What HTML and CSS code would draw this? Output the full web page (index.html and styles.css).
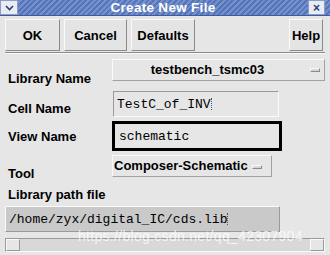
FILE: index.html
```html
<!DOCTYPE html>
<html lang="en">
<head>
  <meta charset="UTF-8" />
  <title>Create New File</title>
  <link rel="stylesheet" href="styles.css">
</head>
<body>
  <div class="dialog">
    <div class="titlebar">
      <span class="tb-btn menu-btn">
        <svg width="9" height="6" viewBox="0 0 9 6"><path d="M1 1 L4.5 4.5 L8 1" fill="none" stroke="#2c3e6b" stroke-width="1.6"/></svg>
      </span>
      <span class="title">Create New File</span>
      <span class="tb-btn close-btn">&#215;</span>
    </div>

    <div class="buttons">
      <button class="btn ok">OK</button>
      <button class="btn cancel">Cancel</button>
      <button class="btn defaults">Defaults</button>
      <span class="spacer"></span>
      <button class="btn help">Help</button>
    </div>
    <div class="sep"></div>

    <div class="form">
      <div class="row r-lib">
        <span class="label">Library Name</span>
        <div class="option wide">testbench_tsmc03<span class="ind"></span></div>
      </div>
      <div class="row r-cell">
        <span class="label">Cell Name</span>
        <div class="field cell">TestC_of_INV<span class="caret"></span></div>
      </div>
      <div class="row r-view">
        <span class="label">View Name</span>
        <div class="field view">schematic</div>
      </div>
      <div class="row r-tool">
        <span class="label">Tool</span>
        <div class="option tool">Composer-Schematic<span class="ind"></span></div>
      </div>
      <div class="path-label">Library path file</div>
      <div class="field path">/home/zyx/digital_IC/cds.lib<span class="caret"></span></div>
      <div class="scrollbar">
        <span class="arrow left"></span>
        <span class="trough"></span>
        <span class="arrow right"></span>
      </div>
    </div>
    <div class="watermark">https://blog.csdn.net/qq_42307904</div>
  </div>
</body>
</html>
```

FILE: styles.css
```css
* {
  box-sizing: border-box;
  margin: 0;
  padding: 0;
}

body {
  width: 330px;
  height: 255px;
  overflow: hidden;
  background: #e6e6e6;
  font-family: "Liberation Sans", Arial, sans-serif;
  color: #000;
}

.dialog {
  position: relative;
  width: 330px;
  height: 255px;
}

.titlebar {
  height: 16px;
  display: flex;
  align-items: center;
  justify-content: space-between;
  background: repeating-linear-gradient(135deg, #5574b9 0 2px, #7490cd 2px 4px);
  border-bottom: 1px solid #3e5a9a;
}

.title {
  color: #fff;
  font-weight: bold;
  font-size: 13.5px;
  letter-spacing: 0.3px;
}

.tb-btn {
  width: 18px;
  height: 15px;
  display: flex;
  align-items: center;
  justify-content: center;
  background: #e8ecf4;
  border: 1px solid #8c9cc4;
  font-size: 12px;
  font-weight: bold;
  color: #2c3e6b;
}

.close-btn {
  margin-right: 5px;
  width: 17px;
}

.buttons {
  display: flex;
  gap: 4px;
  padding: 3px 7px 0 5px;
  height: 36px;
}

.btn {
  height: 32px;
  background: #e4e4e4;
  border: 1px solid;
  border-color: #fafafa #8a8a8a #8a8a8a #fafafa;
  font-family: "Liberation Sans", Arial, sans-serif;
  font-weight: bold;
  font-size: 13px;
  color: #000;
}

.ok { width: 55px; }
.cancel { width: 63px; }
.defaults { width: 64px; }
.help { width: 34px; }
.spacer { flex: 1; }

.sep {
  margin: 0 5px 0 5px;
  height: 2px;
  border-top: 1px solid #8a8a8a;
  border-bottom: 1px solid #fafafa;
}

.form {
  padding: 4px 5px 0 5px;
}

.row {
  display: grid;
  grid-template-columns: 107px auto;
  align-items: center;
}

.label {
  font-weight: bold;
  font-size: 13px;
  padding-left: 3px;
}

.r-lib { height: 23px; margin-bottom: 10px; }
.r-lib .label { align-self: end; margin-bottom: -5px; }
.r-cell { height: 26px; margin-bottom: 4px; }
.r-cell .label { align-self: end; margin-bottom: 1px; }
.r-view { height: 30px; margin-bottom: 3px; }
.r-tool { height: 23px; }
.r-tool .label { align-self: end; margin-bottom: -4px; }

.option {
  position: relative;
  height: 22px;
  display: flex;
  align-items: center;
  justify-content: center;
  background: #e6e6e6;
  border: 1px solid;
  border-color: #fafafa #a0a0a0 #a0a0a0 #fafafa;
  font-weight: bold;
  font-size: 13px;
}

.wide {
  width: 213px;
  padding-right: 22px;
}

.tool {
  width: 160px;
  justify-content: flex-start;
  padding-left: 1px;
}

.ind {
  width: 10px;
  height: 4px;
  background: #d6d6d6;
  border: 1px solid;
  border-color: #fafafa #8a8a8a #8a8a8a #fafafa;
}

.wide .ind {
  position: absolute;
  right: 4px;
  top: 8px;
}

.tool .ind {
  margin-left: 4px;
  margin-top: 2px;
}

.field {
  display: flex;
  align-items: center;
  font-family: "Liberation Mono", "Courier New", monospace;
  font-size: 13px;
  padding-left: 3px;
  background: #e6e6e6;
  border: 1px solid;
  border-color: #9a9a9a #fafafa #fafafa #9a9a9a;
}

.cell {
  width: 166px;
  height: 26px;
  margin-left: 1px;
}

.view {
  width: 170px;
  height: 30px;
  border: 3px solid #000;
  padding-left: 4px;
}

.caret {
  display: inline-block;
  width: 2px;
  height: 12px;
  border-left: 1px dotted #555;
}

.path-label {
  font-weight: bold;
  font-size: 13px;
  padding-left: 3px;
  margin-top: 10px;
  height: 15px;
}

.path {
  margin-top: 4px;
  width: 275px;
  height: 26px;
  background: #c9c9c9;
  border-color: #fafafa #9a9a9a #9a9a9a #fafafa;
}

.scrollbar {
  margin-top: 6px;
  height: 14px;
  width: 320px;
  display: flex;
  border: 1px solid;
  border-color: #9a9a9a #fafafa #fafafa #9a9a9a;
  background: #d8d8d8;
}

.arrow {
  width: 14px;
  background: #e6e6e6;
  border: 1px solid;
  border-color: #fafafa #9a9a9a #9a9a9a #fafafa;
}

.trough { flex: 1; }

.watermark {
  position: absolute;
  left: 78px;
  top: 228px;
  font-family: "Liberation Sans", Arial, sans-serif;
  font-size: 14px;
  color: rgba(255, 255, 255, 0.75);
  letter-spacing: 0.3px;
}
```
